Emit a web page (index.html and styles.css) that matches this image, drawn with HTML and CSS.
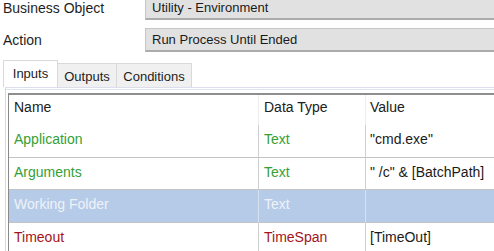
FILE: index.html
```html
<!DOCTYPE html>
<html>
<head>
<meta charset="utf-8">
<link rel="stylesheet" href="styles.css">
</head>
<body>
<div class="props">
  <div class="label">Business Object</div>
  <div class="field">Utility - Environment</div>
  <div class="label">Action</div>
  <div class="field">Run Process Until Ended</div>
</div>
<div class="tabs">
  <div class="tab selected">Inputs</div>
  <div class="tab tab-outputs">Outputs</div>
  <div class="tab tab-conditions">Conditions</div>
</div>
<div class="panel">
  <div class="grid">
    <div class="hcell c1">Name</div>
    <div class="hcell c2">Data Type</div>
    <div class="hcell c3">Value</div>

    <div class="cell c1 green">Application</div>
    <div class="cell c2 green">Text</div>
    <div class="cell c3">"cmd.exe"</div>

    <div class="cell c1 green">Arguments</div>
    <div class="cell c2 green">Text</div>
    <div class="cell c3">" /c" &amp; [BatchPath]</div>

    <div class="cell c1 sel">Working Folder</div>
    <div class="cell c2 sel">Text</div>
    <div class="cell c3 sel"></div>

    <div class="cell c1 red">Timeout</div>
    <div class="cell c2 red">TimeSpan</div>
    <div class="cell c3">[TimeOut]</div>
  </div>
</div>
</body>
</html>
```

FILE: styles.css
```css
html, body {
  margin: 0;
  padding: 0;
  background: #ffffff;
}
body {
  width: 494px;
  height: 251px;
  overflow: hidden;
  font-family: "Liberation Sans", Arial, sans-serif;
  color: #1c1c1c;
}
.props {
  margin-top: -4px;
  padding-left: 3px;
  display: grid;
  grid-template-columns: 142px 1fr;
  grid-auto-rows: 24px;
  row-gap: 8px;
  align-items: center;
}
.label {
  font-size: 14px;
  line-height: 16px;
  color: #1e1e1e;
}
.field {
  box-sizing: border-box;
  height: 24px;
  background: #e1e1e1;
  border: 1px solid #c6c6c6;
  border-bottom: 2px solid #acacac;
  border-right: none;
  padding-left: 6px;
  font-size: 13px;
  line-height: 21px;
  color: #1a1a1a;
}
.tabs {
  margin-top: 8px;
  padding-left: 3px;
  height: 27px;
  display: flex;
  align-items: flex-end;
}
.tab {
  box-sizing: border-box;
  font-size: 13px;
  line-height: 15px;
  text-align: center;
  padding-top: 5px;
  color: #1c1c1c;
  background: #f0f0f0;
  border-top: 1px solid #d9d9d9;
  border-right: 1px solid #d9d9d9;
  height: 24px;
}
.tab.selected {
  width: 55px;
  height: 27px;
  background: #ffffff;
  border-left: 1px solid #d9d9d9;
}
.tab-outputs {
  width: 59px;
}
.tab-conditions {
  width: 75px;
}
.panel {
  margin-left: 5px;
  border-top: 1px solid #dcdfeb;
  border-left: 1px solid #d9d9d9;
  padding-top: 5px;
  padding-left: 2px;
  box-shadow: inset 0 2px 0 -1px #ffffff, inset 0 2px 0 0 #dbe5f3;
}
.grid {
  display: grid;
  grid-template-columns: 250px 107px 1fr;
  border-top: 2px solid #8e8e8e;
  border-left: 1px solid #8a8a8a;
  background: #ffffff;
}
.hcell {
  box-sizing: border-box;
  height: 30px;
  padding: 4px 0 0 5px;
  font-size: 14px;
  line-height: 16px;
  color: #202020;
}
.hcell.c1, .hcell.c2 {
  border-right: 1px solid #ececec;
}
.hcell.c3 {
  padding-left: 4px;
}
.cell {
  box-sizing: border-box;
  height: 32.5px;
  padding: 6px 0 0 5px;
  font-size: 14px;
  line-height: 16px;
  color: #1a1a1a;
  border-bottom: 1px solid #c4c4c4;
}
.cell.c1, .cell.c2 {
  border-right: 1px solid #cfcfcf;
}
.cell.c3 {
  padding-left: 4px;
}
.green {
  color: #35a035;
}
.red {
  color: #a3141c;
}
.cell.sel {
  background: #b6cbe8;
  color: #eef2f8;
  border-right-color: #d6e1f0;
}
```
